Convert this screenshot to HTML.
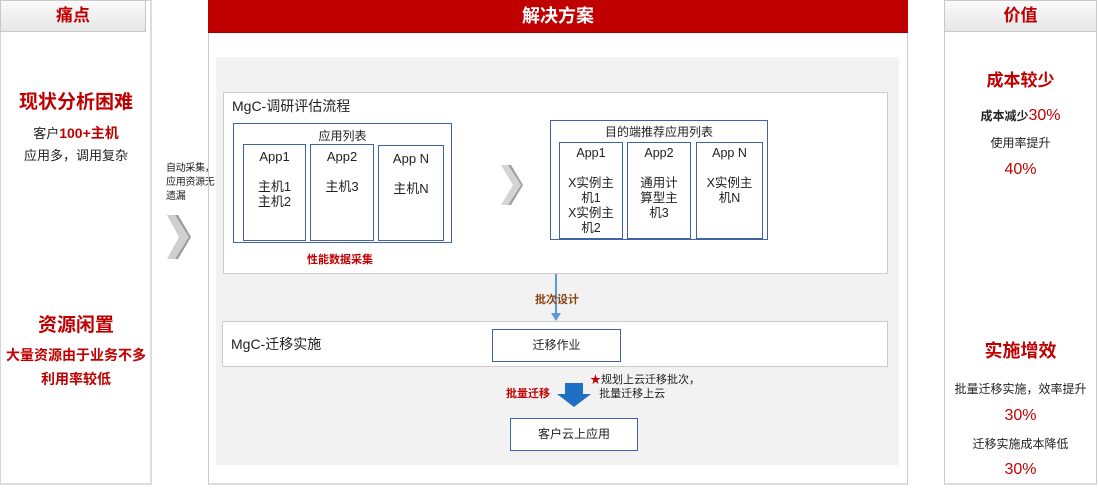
<!DOCTYPE html>
<html><head><meta charset="utf-8"><style>
*{margin:0;padding:0;box-sizing:border-box}
body{width:1098px;height:490px;background:#fff;position:relative;overflow:hidden;font-family:"Liberation Sans","Noto Sans CJK SC",sans-serif;color:#222}
.a{position:absolute}
.c{text-align:center;white-space:nowrap}
.hd{background:linear-gradient(#fafafa,#e6e6e6);border:1px solid #c8c8c8;color:#c00000;font-weight:bold;font-size:17px;text-align:center;line-height:30px}
.red{color:#c00000}
.box{border:1.5px solid #3f62a8;background:#fff}
.t{font-size:12px;line-height:14px}
</style></head><body>
<!-- left panel -->
<div class="a" style="left:0;top:0;width:152px;height:485px;border:1px solid #d4d4d4;border-right:2px solid #ddd;border-bottom:2px solid #ddd"></div>
<div class="a hd" style="left:0;top:0;width:146px;height:32px">痛点</div>
<div class="a c red" style="left:0;width:152px;top:87px;font-size:19px;font-weight:bold">现状分析困难</div>
<div class="a c" style="left:0;width:152px;top:123px;font-size:13px">客户<span class="red" style="font-weight:bold;font-size:14px">100+主机</span></div>
<div class="a c" style="left:0;width:152px;top:145px;font-size:13px">应用多，调用复杂</div>
<div class="a c red" style="left:0;width:152px;top:310px;font-size:19px;font-weight:bold">资源闲置</div>
<div class="a c red" style="left:0;width:152px;top:345px;font-size:14px;font-weight:bold">大量资源由于业务不多</div>
<div class="a c red" style="left:0;width:152px;top:369px;font-size:14px;font-weight:bold">利用率较低</div>

<div class="a" style="left:166px;top:162px;font-size:10px;line-height:14px;letter-spacing:-0.3px">自动采集，<br>应用资源无<br>遗漏</div>
<svg class="a" style="left:163px;top:212px" width="30" height="50"><path d="M4 3 L16 25 L4 47 L12 47 L26 25 L12 3Z" fill="#cfcfcf"/><path d="M12 3 L26 25 L12 47 L15 47 L28 25 L15 3Z" fill="#999"/></svg>

<!-- middle -->
<div class="a" style="left:208px;top:30px;width:700px;height:455px;border:1px solid #ccc;border-bottom:2px solid #ddd"></div>
<div class="a" style="left:208px;top:0;width:700px;height:33px;background:#c00000;color:#fff;font-size:18px;font-weight:bold;text-align:center;line-height:33px;border-bottom:1px solid #900">解决方案</div>
<div class="a" style="left:216px;top:57px;width:683px;height:408px;background:#f2f2f2"></div>
<div class="a" style="left:223px;top:92px;width:665px;height:182px;background:#fff;border:1px solid #ccc"></div>
<div class="a" style="left:232px;top:96px;font-size:14px">MgC-调研评估流程</div>
<div class="a box" style="left:233px;top:123px;width:219px;height:120px"></div>
<div class="a c t" style="left:233px;width:219px;top:129px">应用列表</div>
<div class="a box" style="left:243px;top:144px;width:63px;height:97px"></div>
<div class="a box" style="left:310px;top:144px;width:64px;height:97px"></div>
<div class="a box" style="left:378px;top:145px;width:66px;height:96px"></div>
<div class="a c" style="left:243px;width:63px;top:149px;font-size:13px;line-height:15px">App1<br><br>主机1<br>主机2</div>
<div class="a c" style="left:310px;width:64px;top:149px;font-size:13px;line-height:15px">App2<br><br>主机3</div>
<div class="a c" style="left:378px;width:66px;top:151px;font-size:13px;line-height:15px">App N<br><br>主机N</div>
<div class="a red" style="left:307px;top:251px;font-size:11px;font-weight:bold">性能数据采集</div>
<svg class="a" style="left:499px;top:162px" width="26" height="46"><path d="M2 3 L14 23 L2 43 L9 43 L22 23 L9 3Z" fill="#d4d4d4"/><path d="M9 3 L22 23 L9 43 L12 43 L24 23 L12 3Z" fill="#a0a0a0"/></svg>
<div class="a box" style="left:550px;top:120px;width:218px;height:120px"></div>
<div class="a c t" style="left:550px;width:218px;top:125px">目的端推荐应用列表</div>
<div class="a box" style="left:559px;top:142px;width:64px;height:97px"></div>
<div class="a box" style="left:627px;top:142px;width:64px;height:97px"></div>
<div class="a box" style="left:696px;top:142px;width:67px;height:97px"></div>
<div class="a c" style="left:559px;width:64px;top:146px;font-size:12.5px;line-height:15px">App1<br><br>X实例主<br>机1<br>X实例主<br>机2</div>
<div class="a c" style="left:627px;width:64px;top:146px;font-size:12.5px;line-height:15px">App2<br><br>通用计<br>算型主<br>机3</div>
<div class="a c" style="left:696px;width:67px;top:146px;font-size:12.5px;line-height:15px">App N<br><br>X实例主<br>机N</div>

<div class="a" style="left:555px;top:274px;width:1.5px;height:42px;background:#5b9bd5"></div>
<svg class="a" style="left:551px;top:313px" width="10" height="8"><path d="M0 0 L10 0 L5 8Z" fill="#5b9bd5"/></svg>
<div class="a" style="left:535px;top:291px;font-size:11px;font-weight:bold;color:#8b4513">批次设计</div>

<div class="a" style="left:222px;top:321px;width:666px;height:46px;background:#fff;border:1px solid #ccc"></div>
<div class="a" style="left:231px;top:334px;font-size:14px">MgC-迁移实施</div>
<div class="a box c" style="left:492px;top:329px;width:129px;height:33px;font-size:12px;line-height:30px">迁移作业</div>
<div class="a red" style="left:506px;top:385px;font-size:11px;font-weight:bold">批量迁移</div>
<svg class="a" style="left:557px;top:383px" width="34" height="24"><path d="M8 0 H26 V11 H34 L17 24 L0 11 H8Z" fill="#1f6fc5"/></svg>
<div class="a" style="left:590px;top:373px;font-size:11px;line-height:14px"><span class="red">★</span>规划上云迁移批次，<br>&nbsp;&nbsp;&nbsp;批量迁移上云</div>
<div class="a box c" style="left:510px;top:418px;width:128px;height:33px;font-size:12px;line-height:30px">客户云上应用</div>

<!-- right panel -->
<div class="a" style="left:944px;top:0;width:153px;height:485px;border:1px solid #ccc;border-bottom:2px solid #ddd"></div>
<div class="a hd" style="left:944px;top:0;width:153px;height:32px">价值</div>
<div class="a c red" style="left:944px;width:153px;top:66px;font-size:17px;font-weight:bold">成本较少</div>
<div class="a c" style="left:944px;width:153px;top:107px;font-size:12px"><b>成本减少</b><span class="red" style="font-size:16px">30%</span></div>
<div class="a c" style="left:944px;width:153px;top:134px;font-size:12px">使用率提升</div>
<div class="a c red" style="left:944px;width:153px;top:161px;font-size:16px">40%</div>
<div class="a c red" style="left:944px;width:153px;top:337px;font-size:18px;font-weight:bold">实施增效</div>
<div class="a c" style="left:944px;width:153px;top:380px;font-size:12px">批量迁移实施，效率提升</div>
<div class="a c red" style="left:944px;width:153px;top:407px;font-size:16px">30%</div>
<div class="a c" style="left:944px;width:153px;top:435px;font-size:12px">迁移实施成本降低</div>
<div class="a c red" style="left:944px;width:153px;top:461px;font-size:16px">30%</div>
</body></html>
